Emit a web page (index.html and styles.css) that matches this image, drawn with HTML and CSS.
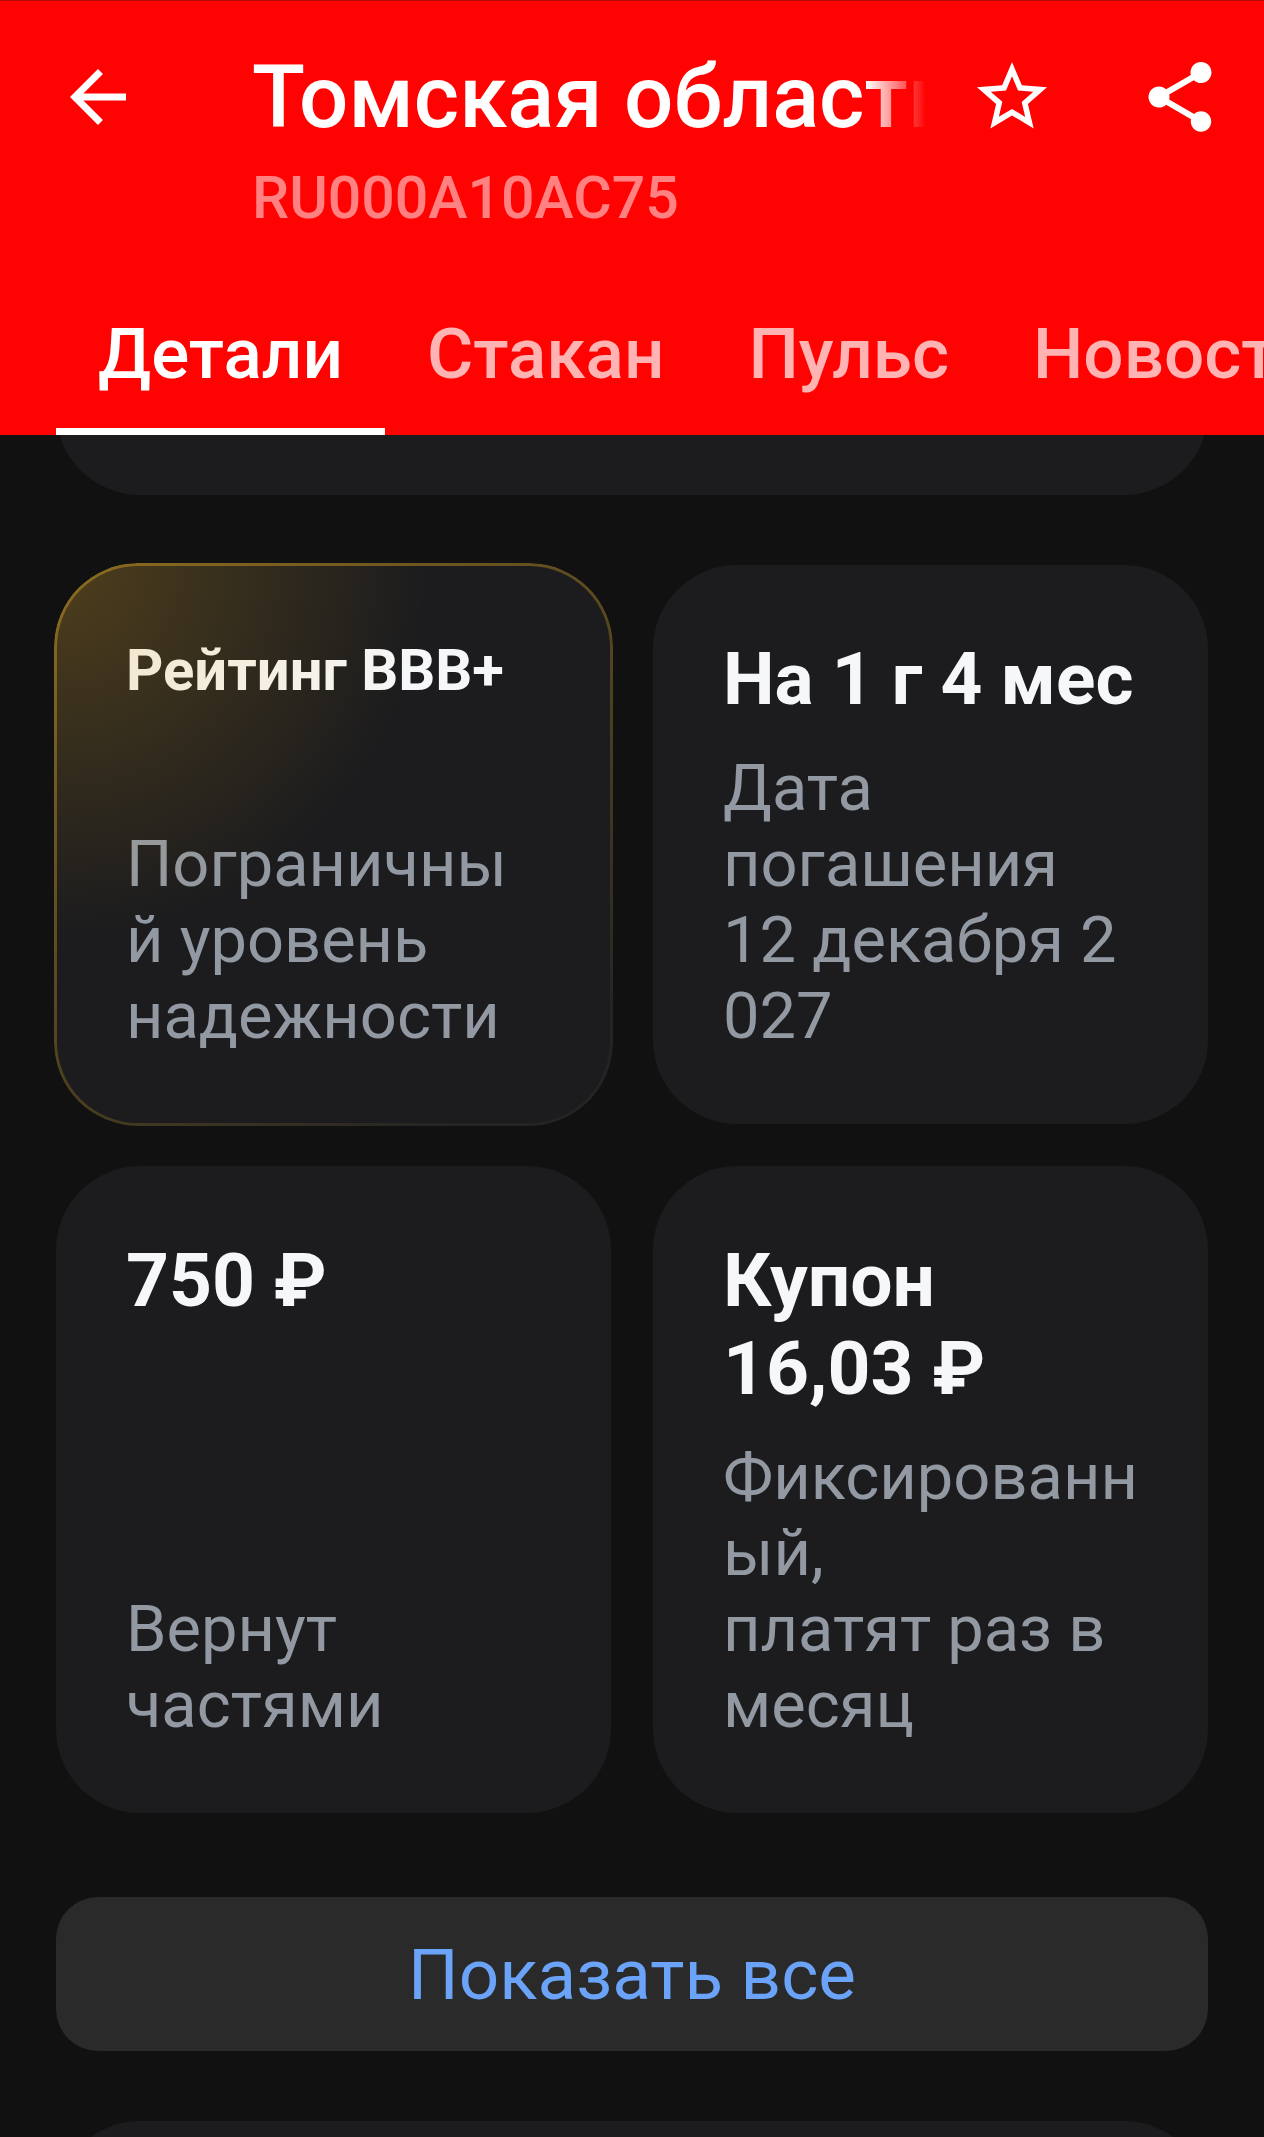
FILE: index.html
```
<!DOCTYPE html>
<html lang="ru">
<head>
  <meta charset="UTF-8">
  <meta name="viewport" content="width=device-width, initial-scale=1">
  <title>Томская область</title>
  <link rel="stylesheet" href="styles.css">
</head>
<body>
  <header class="header">
    <div class="toolbar">
      <button class="icon-btn" aria-label="Назад">
        <svg viewBox="0 0 24 24"><path d="M20 11H7.83l5.59-5.59L12 4l-8 8 8 8 1.41-1.41L7.83 13H20v-2z"/></svg>
      </button>
      <h1 class="title">Томская область</h1>
      <button class="icon-btn" aria-label="В избранное">
        <svg viewBox="0 0 24 24"><path d="M22 9.24l-7.19-.62L12 2 9.19 8.63 2 9.24l5.46 4.73L5.82 21 12 17.27 18.18 21l-1.63-7.03L22 9.24zM12 15.4l-3.76 2.27 1-4.28-3.32-2.88 4.38-.38L12 6.1l1.71 4.04 4.38.38-3.32 2.88 1 4.28L12 15.4z"/></svg>
      </button>
      <button class="icon-btn" aria-label="Поделиться">
        <svg viewBox="0 0 24 24"><path d="M18 16.08c-.76 0-1.44.3-1.96.77L8.91 12.7c.05-.23.09-.46.09-.7s-.04-.47-.09-.7l7.05-4.11c.54.5 1.25.81 2.04.81 1.66 0 3-1.34 3-3s-1.34-3-3-3-3 1.34-3 3c0 .24.04.47.09.7L8.04 9.81C7.5 9.31 6.79 9 6 9c-1.66 0-3 1.34-3 3s1.34 3 3 3c.79 0 1.5-.31 2.04-.81l7.12 4.16c-.05.21-.08.43-.08.65 0 1.61 1.31 2.92 2.92 2.92s2.92-1.31 2.92-2.92-1.31-2.92-2.92-2.92z"/></svg>
      </button>
    </div>
    <p class="isin">RU000A10AC75</p>
    <nav class="tabs">
      <a href="#details" class="tab active">Детали</a>
      <a href="#book" class="tab">Стакан</a>
      <a href="#pulse" class="tab">Пульс</a>
      <a href="#news" class="tab">Новости</a>
    </nav>
  </header>

  <main class="content" id="details">
    <section class="panel panel-top"></section>

    <div class="cards">
      <article class="card card-rating">
        <h2 class="card-title small">Рейтинг BBB+</h2>
        <p class="card-text">Пограничный уровень надежности</p>
      </article>
      <article class="card">
        <h2 class="card-title medium">На 1 г 4 мес</h2>
        <p class="card-text">Дата погашения<br>12&nbsp;декабря&nbsp;2027</p>
      </article>
      <article class="card">
        <h2 class="card-title">750 ₽</h2>
        <p class="card-text">Вернут<br>частями</p>
      </article>
      <article class="card">
        <h2 class="card-title">Купон<br>16,03 ₽</h2>
        <p class="card-text">Фиксированный,<br>платят раз в месяц</p>
      </article>
    </div>

    <button class="show-all">Показать все</button>

    <section class="panel"></section>
  </main>
</body>
</html>
```

FILE: styles.css
```
:root {
  --red: #ff0303;
  --bg: #111111;
  --card: #1c1c1e;
  --text: #f6f7f8;
  --muted: #9299a2;
  --link: #6ba3f8;
}

* {
  margin: 0;
  padding: 0;
  box-sizing: border-box;
}

body {
  display: flex;
  flex-direction: column;
  height: 100vh;
  overflow: hidden;
  background: var(--bg);
  color: var(--text);
  font-family: Roboto, sans-serif;
}

button {
  border: none;
  background: none;
  font-family: inherit;
  cursor: pointer;
}

/* Header */
.header {
  position: relative;
  z-index: 1;
  flex: none;
  background: var(--red);
  border-top: 1px solid #b80808;
  color: #fff;
}
.toolbar {
  display: flex;
  align-items: center;
  height: 168px;
  padding: 24px 42px 0 56px;
}
.icon-btn {
  flex: none;
  width: 84px;
  height: 84px;
}
.icon-btn svg {
  display: block;
  width: 100%;
  height: 100%;
  fill: #fff;
}
.icon-btn + .icon-btn {
  margin-left: 84px;
}
.title {
  flex: 1;
  min-width: 0;
  margin: 0 44px 0 112px;
  overflow: hidden;
  white-space: nowrap;
  font-size: 87px;
  font-weight: 500;
  line-height: 104px;
  -webkit-mask-image: linear-gradient(to left, transparent, #000 60px);
  mask-image: linear-gradient(to left, transparent, #000 60px);
}
.isin {
  padding-left: 252px;
  color: rgba(255, 255, 255, 0.5);
  font-size: 59px;
  font-weight: 500;
  line-height: 58px;
}

/* Tabs */
.tabs {
  display: flex;
  margin-top: 52px;
  padding-left: 56px;
  overflow: hidden;
}
.tab {
  flex: none;
  height: 156px;
  padding: 33px 42px 0;
  border-bottom: 7px solid transparent;
  color: rgba(255, 255, 255, 0.7);
  font-size: 71px;
  font-weight: 500;
  line-height: 84px;
  text-decoration: none;
}
.tab.active {
  color: #fff;
  border-bottom-color: #fff;
}

/* Content */
.content {
  flex: 1;
  min-height: 0;
  padding: 0 56px;
  overflow: hidden;
}
.panel {
  height: 180px;
  border-radius: 84px;
  background: var(--card);
}
/* scrolled up under the header */
.panel-top {
  margin-top: -120px;
}

.cards {
  display: grid;
  grid-template-columns: repeat(2, minmax(0, 1fr));
  gap: 42px;
  margin: 70px 0 84px;
}
.card {
  position: relative;
  display: flex;
  flex-direction: column;
  justify-content: space-between;
  gap: 27px;
  padding: 70px;
  border-radius: 84px;
  background: var(--card);
}
.card-title {
  font-size: 75px;
  font-weight: 700;
  line-height: 88px;
  white-space: nowrap;
}
.card-title.medium {
  font-size: 73px;
}
.card-title.small {
  font-size: 58px;
  line-height: 70px;
}
.card-text {
  color: var(--muted);
  font-size: 65px;
  line-height: 76px;
  overflow-wrap: anywhere;
}

/* Gold glow and border of the rating card */
.card-rating::before,
.card-rating::after {
  content: '';
  position: absolute;
  inset: 0;
  border-radius: inherit;
  pointer-events: none;
}
.card-rating::before {
  background: radial-gradient(circle at 0 0, rgba(228, 164, 20, 0.25), rgba(228, 164, 20, 0) 370px);
}
.card-rating::after {
  inset: -2px;
  padding: 3px;
  background: linear-gradient(145deg, #8c6c20, #54451f 50%, #242424 88%);
  -webkit-mask: linear-gradient(#000 0 0) content-box, linear-gradient(#000 0 0);
  -webkit-mask-composite: xor;
  mask: linear-gradient(#000 0 0) content-box exclude, linear-gradient(#000 0 0);
}

.show-all {
  display: block;
  width: 100%;
  height: 154px;
  margin-bottom: 70px;
  border-radius: 42px;
  background: #2a2a2a;
  color: var(--link);
  font-size: 71px;
}
```
